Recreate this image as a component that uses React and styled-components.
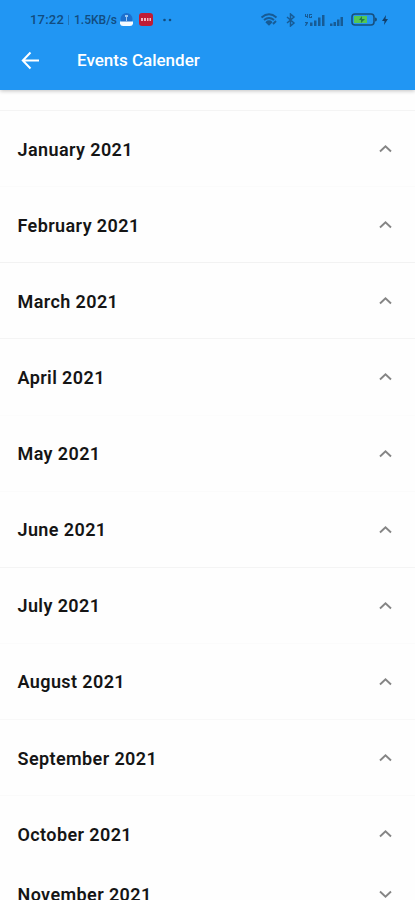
import React, { useState } from 'react';
import styled, { createGlobalStyle } from 'styled-components';

const GlobalStyle = createGlobalStyle`
  body {
    margin: 0;
    overflow: hidden;
    background: #fefefe;
    font-family: Roboto, sans-serif;
  }
`;

const Screen = styled.div`
  display: flex;
  flex-direction: column;
  height: 100vh;
  overflow: hidden;
`;

const Header = styled.header`
  flex: none;
  height: 90px;
  background: #2196f3;
  box-shadow: 0 1px 4px rgba(0, 0, 0, 0.24);
`;

const StatusBar = styled.div`
  display: flex;
  align-items: center;
  justify-content: space-between;
  height: 39px;
  padding: 0 26px 0 30px;
  box-sizing: border-box;
  color: #124c7f;
`;

const StatusGroup = styled.div`
  display: flex;
  align-items: center;
`;

const Clock = styled.span`
  width: 34px;
  font-size: 13px;
  font-weight: 500;
  letter-spacing: 0.2px;
`;

const Separator = styled.span`
  width: 1px;
  height: 10px;
  margin: 0 5px 0 4px;
  background: #2273b6;
`;

const Speed = styled.span`
  width: 43px;
  font-size: 12px;
  font-weight: 500;
  white-space: nowrap;
`;

const StatusIcon = styled.svg`
  display: block;
  flex: none;
  margin-left: ${(props) => props.$gap || 0}px;
`;

const AppBar = styled.div`
  display: flex;
  align-items: center;
  height: 42px;
  padding-left: 20px;
  color: #fff;
`;

const BackButton = styled.button`
  display: flex;
  padding: 0;
  border: none;
  background: none;
  color: inherit;
`;

const Title = styled.h1`
  margin: 0 0 0 36px;
  font-size: 17px;
  font-weight: 500;
  line-height: 20px;
`;

const List = styled.main`
  flex: 1;
  min-height: 0;
  padding-top: 20px;
  overflow: hidden;
`;

const Month = styled.section`
  box-sizing: border-box;
  height: ${(props) => (props.$last ? 68 : 76.15)}px;
  padding-top: ${(props) => (props.$open ? 8 : 0)}px;
  border-top: 1px solid ${(props) => props.$line};
`;

const MonthHeader = styled.button`
  display: flex;
  align-items: center;
  justify-content: space-between;
  width: 100%;
  height: 60px;
  padding: 0 22px 0 17.5px;
  border: none;
  background: none;
  color: #151515;
  font-family: inherit;
  font-size: 18px;
  font-weight: 600;
  letter-spacing: 0.4px;
`;

const months = [
  { name: 'January 2021', open: true, line: '#f4f4f4' },
  { name: 'February 2021', open: true, line: '#fbfbfb' },
  { name: 'March 2021', open: true, line: '#f2f2f2' },
  { name: 'April 2021', open: true, line: '#f4f4f4' },
  { name: 'May 2021', open: true, line: '#fcfcfc' },
  { name: 'June 2021', open: true, line: '#fbfbfb' },
  { name: 'July 2021', open: true, line: '#f4f4f4' },
  { name: 'August 2021', open: true, line: '#fbfbfb' },
  { name: 'September 2021', open: true, line: '#f8f8f8' },
  { name: 'October 2021', open: true, line: '#fafafa', last: true },
  { name: 'November 2021', open: false, line: 'transparent' },
];

const Chevron = ({ up }) => (
  <svg width="15" height="10" viewBox="0 0 15 10" fill="none" stroke="#858585" strokeWidth="1.9">
    <path d={up ? 'M2 7.5 7.5 2.2 13 7.5' : 'M2 2.5 7.5 7.8 13 2.5'} />
  </svg>
);

const PhoneStatus = () => (
  <StatusBar>
    <StatusGroup>
      <Clock>17:22</Clock>
      <Separator />
      <Speed>1.5KB/s</Speed>
      <StatusIcon $gap={3} width="13" height="13" viewBox="0 0 13 13">
        <circle cx="6.5" cy="6" r="6" fill="#1c6fce" />
        <path d="M5 2h3v2H7v4H6V4H5z" fill="#9bc8f2" />
        <path d="M0 8.5h13v2.2Q12.5 13 10 13H3Q.5 13 0 10.7z" fill="#f4faff" />
      </StatusIcon>
      <StatusIcon $gap={6} width="14" height="13" viewBox="0 0 14 13">
        <rect width="14" height="13" rx="3" fill="#c01c34" />
        <path d="M2 5h2v3H2zM5 5h2v3H5zM8 5h1.5v3H8zM10.5 5H12v3h-1.5z" fill="#f2b6bf" />
      </StatusIcon>
      <StatusIcon $gap={10} width="9" height="4" viewBox="0 0 9 4" fill="#124c7f">
        <circle cx="1.5" cy="2" r="1.3" />
        <circle cx="7" cy="2" r="1.3" />
      </StatusIcon>
    </StatusGroup>
    <StatusGroup>
      <StatusIcon width="18" height="13" viewBox="0 0 18 13" fill="none" stroke="#175b95" strokeWidth="1.9">
        <path d="M1.5 4.5Q9-1.8 16.5 4.5M4 7Q9 2.8 14 7M6.5 9.3Q9 7 11.500 9.3" />
        <path d="m7.5 10 1.5 1.5 1.5-1.5zM13 11l3-3" />
      </StatusIcon>
      <StatusIcon $gap={8} width="10" height="14" viewBox="0 0 10 14" fill="none" stroke="#175b95" strokeWidth="1.5">
        <path d="m1 4 7 6-3.5 3V1L8 4l-7 6" />
      </StatusIcon>
      <StatusIcon $gap={7} width="24" height="14" viewBox="0 0 24 14" fill="#175b95">
        <path d="M2 1h1v2h1V1h1v4H4V4H2zM6 1h3v1H7v2h1V3h1v2H6zM2 9h3v1l-2 3H2l1-3H2z" />
        <path d="M7 9.500h2.5V13H7zM11 7.5h2.500V13H11zM15 4.5h2.5V13H15zM19 2h2.5v11H19z" />
      </StatusIcon>
      <StatusIcon $gap={2} width="16" height="14" viewBox="0 0 16 14" fill="#175b95">
        <path d="M1 10.5h2.500V13H1zM4.500 9H7v4H4.500zM8 6.500h2.500V13H8zM11.500 4H14v9h-2.500z" />
      </StatusIcon>
      <StatusIcon $gap={6} width="27" height="13" viewBox="0 0 27 13">
        <rect x="1" y="1" width="22" height="11" rx="3" fill="none" stroke="#174f7e" strokeWidth="1.6" />
        <path d="M3 3h13v7H3z" fill="#53c653" />
        <path d="M24 4.5q2 0 2 2t-2 2z" fill="#174f7e" />
        <path d="M11 3 8 7h2v3l4-4h-3z" fill="#237b48" />
      </StatusIcon>
      <StatusIcon $gap={3} width="8" height="12" viewBox="0 0 8 12">
        <path d="M5 1 1 7h2.5L3 11l4-6H4.5z" fill="#123f6b" />
      </StatusIcon>
    </StatusGroup>
  </StatusBar>
);

const MonthItem = ({ month }) => {
  const [open, setOpen] = useState(month.open);

  return (
    <Month $open={open} $line={month.line} $last={month.last}>
      <MonthHeader onClick={() => setOpen(!open)}>
        <span>{month.name}</span>
        <Chevron up={open} />
      </MonthHeader>
    </Month>
  );
};

export default function App() {
  return (
    <Screen>
      <GlobalStyle />
      <Header>
        <PhoneStatus />
        <AppBar>
          <BackButton aria-label="Back">
            <svg width="21" height="19" viewBox="0 0 21 19" fill="none" stroke="currentColor" strokeWidth="2">
              <path d="M10.5 1.5 2.8 9.5l7.7 8M3 9.5h16" />
            </svg>
          </BackButton>
          <Title>Events Calender</Title>
        </AppBar>
      </Header>
      <List>
        {months.map((month) => (
          <MonthItem key={month.name} month={month} />
        ))}
      </List>
    </Screen>
  );
}
